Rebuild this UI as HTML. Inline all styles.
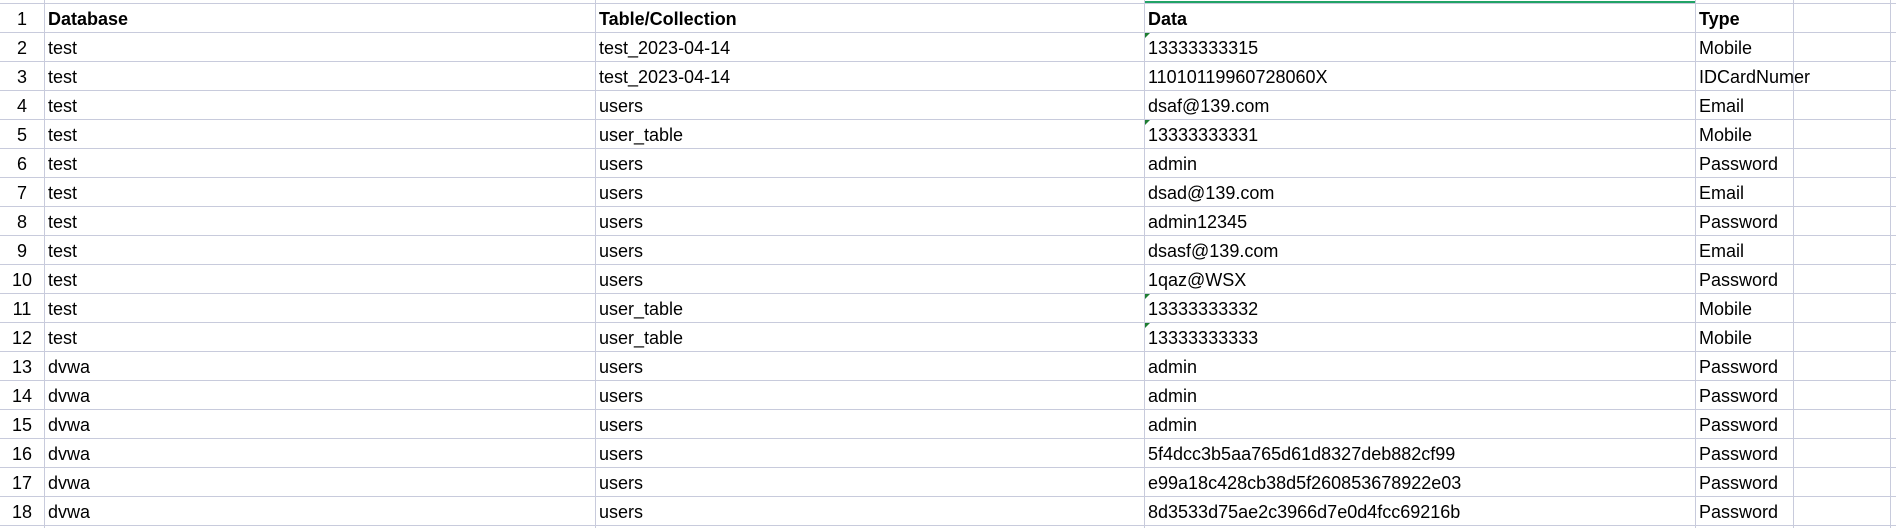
<!DOCTYPE html><html><head><style>
body{margin:0;width:1896px;height:528px;background:#fff;overflow:hidden;position:relative;font-family:"Liberation Sans",sans-serif;font-size:18px;color:#000}
.v{position:absolute;top:0;width:1px;height:528px;background:#c8cbdc}
.h{position:absolute;left:0;width:1896px;height:1px;background:#c8cbdc}
.t{position:absolute;height:29px;line-height:30px;white-space:nowrap;background:transparent}
.n{position:absolute;left:0;width:44px;text-align:center;height:29px;line-height:30px}
.b{font-weight:bold}
.g{position:absolute;width:0;height:0;border-top:5px solid #1e7d32;border-right:5px solid transparent}
</style></head><body>
<div class="v" style="left:44px"></div>
<div class="v" style="left:595px"></div>
<div class="v" style="left:1144px"></div>
<div class="v" style="left:1695px"></div>
<div class="v" style="left:1793px"></div>
<div class="v" style="left:1890px"></div>
<div id="rows"></div>
<div style="position:absolute;left:1145px;top:1px;width:550px;height:2px;background:#21a366"></div>
<script>
var d=[["Database","Table/Collection","Data","Type"],
["test","test_2023-04-14","13333333315","Mobile",1],
["test","test_2023-04-14","11010119960728060X","IDCardNumer"],
["test","users","dsaf@139.com","Email"],
["test","user_table","13333333331","Mobile",1],
["test","users","admin","Password"],
["test","users","dsad@139.com","Email"],
["test","users","admin12345","Password"],
["test","users","dsasf@139.com","Email"],
["test","users","1qaz@WSX","Password"],
["test","user_table","13333333332","Mobile",1],
["test","user_table","13333333333","Mobile",1],
["dvwa","users","admin","Password"],
["dvwa","users","admin","Password"],
["dvwa","users","admin","Password"],
["dvwa","users","5f4dcc3b5aa765d61d8327deb882cf99","Password"],
["dvwa","users","e99a18c428cb38d5f260853678922e03","Password"],
["dvwa","users","8d3533d75ae2c3966d7e0d4fcc69216b","Password"]];
var h='<div class="h" style="top:3px"></div>';
var xs=[48,599,1148,1699];
for(var i=0;i<d.length;i++){var y=4+i*29;
h+='<div class="h" style="top:'+(y+28)+'px"></div>';
h+='<div class="n" style="top:'+y+'px">'+(i+1)+'</div>';
if(i==2)h+='<div style="position:absolute;left:1794px;top:'+y+'px;width:90px;height:28px;background:#fff"></div>';
for(var j=0;j<4;j++)h+='<div class="t'+(i==0?' b':'')+'" style="left:'+xs[j]+'px;top:'+y+'px">'+d[i][j]+'</div>';
if(d[i][4])h+='<div class="g" style="left:1145px;top:'+y+'px"></div>';}
document.getElementById('rows').innerHTML=h;
</script>
</body></html>
